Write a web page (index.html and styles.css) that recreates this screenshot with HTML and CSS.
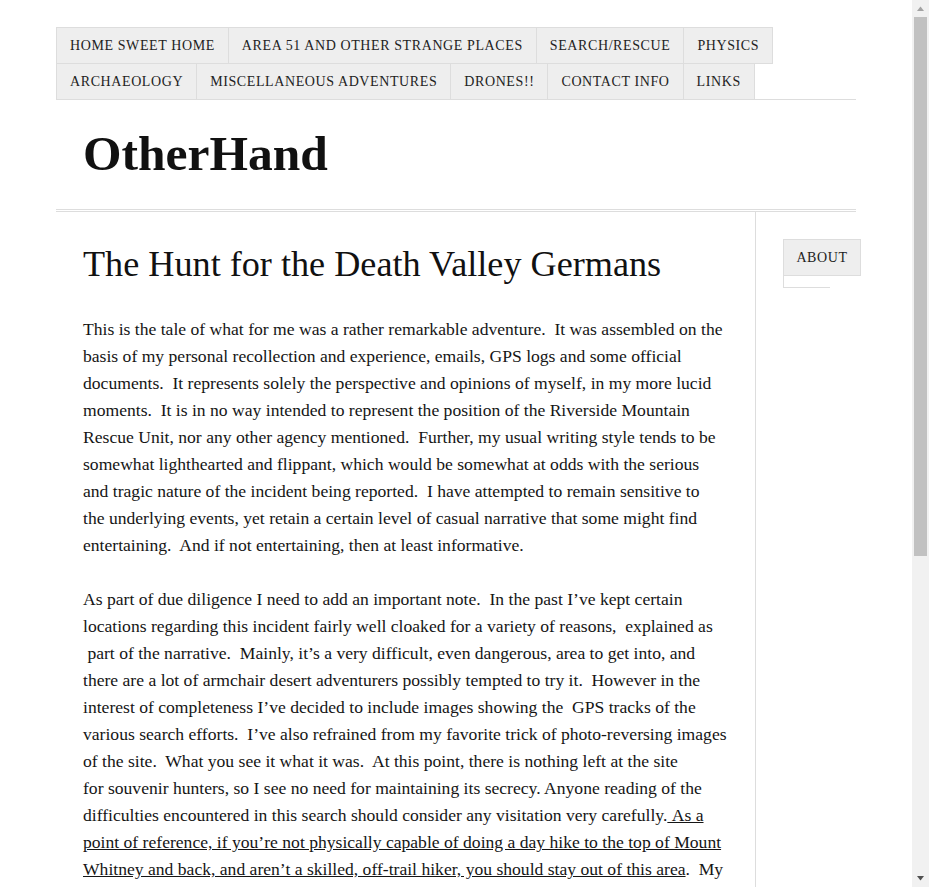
FILE: index.html
```html
<!DOCTYPE html>
<html lang="en">
<head>
<meta charset="utf-8">
<title>The Hunt for the Death Valley Germans | OtherHand</title>
<link rel="stylesheet" href="styles.css">
</head>
<body>
<div class="site">
  <nav class="menu">
    <ul class="menu-list">
      <li class="menu-item">Home Sweet Home</li>
      <li class="menu-item">Area 51 and Other Strange Places</li>
      <li class="menu-item">Search/Rescue</li>
      <li class="menu-item">Physics</li>
      <li class="menu-item">Archaeology</li>
      <li class="menu-item">Miscellaneous Adventures</li>
      <li class="menu-item">Drones!!</li>
      <li class="menu-item">Contact Info</li>
      <li class="menu-item">Links</li>
    </ul>
  </nav>
  <header class="masthead">
    <h1 class="site-title">OtherHand</h1>
  </header>
  <div class="main">
    <article class="content">
      <h2 class="entry-title">The Hunt for the Death Valley Germans</h2>
      <p class="entry-p">This is the tale of what for me was a rather remarkable adventure.&nbsp; It was assembled on the<br>basis of my personal recollection and experience, emails, GPS logs and some official<br>documents.&nbsp; It represents solely the perspective and opinions of myself, in my more lucid<br>moments.&nbsp; It is in no way intended to represent the position of the Riverside Mountain<br>Rescue Unit, nor any other agency mentioned.&nbsp; Further, my usual writing style tends to be<br>somewhat lighthearted and flippant, which would be somewhat at odds with the serious<br>and tragic nature of the incident being reported.&nbsp; I have attempted to remain sensitive to<br>the underlying events, yet retain a certain level of casual narrative that some might find<br>entertaining.&nbsp; And if not entertaining, then at least informative.</p>
      <p class="entry-p">As part of due diligence I need to add an important note.&nbsp; In the past I’ve kept certain<br>locations regarding this incident fairly well cloaked for a variety of reasons,&nbsp; explained as<br>&nbsp;part of the narrative.&nbsp; Mainly, it’s a very difficult, even dangerous, area to get into, and<br>there are a lot of armchair desert adventurers possibly tempted to try it.&nbsp; However in the<br>interest of completeness I’ve decided to include images showing the&nbsp; GPS tracks of the<br>various search efforts.&nbsp; I’ve also refrained from my favorite trick of photo-reversing images<br>of the site.&nbsp; What you see it what it was.&nbsp; At this point, there is nothing left at the site<br>for souvenir hunters, so I see no need for maintaining its secrecy. Anyone reading of the<br>difficulties encountered in this search should consider any visitation very carefully.<span class="u">&nbsp;As a<br>point of reference, if you’re not physically capable of doing a day hike to the top of Mount<br>Whitney and back, and aren’t a skilled, off-trail hiker, you should stay out of this area</span>.&nbsp; My</p>
    </article>
    <aside class="sidebar">
      <div class="side-button">About</div>
      <div class="side-list"></div>
    </aside>
  </div>
</div>
<div class="scrollbar" aria-hidden="true">
  <svg class="sb-arrow" width="17" height="17" viewBox="0 0 17 17"><path d="M5 11 L12 11 L8.5 6.5 Z" fill="#a3a3a3"/></svg>
  <div class="sb-track"><div class="sb-thumb"></div></div>
  <svg class="sb-arrow" width="17" height="17" viewBox="0 0 17 17"><path d="M5 6 L12 6 L8.5 10.5 Z" fill="#505050"/></svg>
</div>
</body>
</html>
```
FILE: styles.css
```css
html, body {
  margin: 0;
  padding: 0;
  background: #fff;
}
body {
  color: #151515;
  font-family: "Liberation Serif", "Times New Roman", serif;
  height: 887px;
  overflow: hidden;
  margin-right: 17px;
}
.site {
  width: 800px;
  margin: 27px auto 0;
}
.menu-list {
  list-style: none;
  margin: 0;
  padding: 0;
  display: flex;
  flex-wrap: wrap;
  border-bottom: 1px solid #ddd;
}
.menu-item {
  box-sizing: border-box;
  height: 37px;
  line-height: 35px;
  padding: 0 13px;
  margin: 0 -1px -1px 0;
  border: 1px solid #ddd;
  background: #eee;
  text-transform: uppercase;
  font-size: 14px;
  letter-spacing: 0.6px;
  color: #222;
  white-space: nowrap;
}
.masthead {
  padding: 0 27px;
  height: 109px;
  border-bottom: 3px double #ddd;
}
.site-title {
  margin: 0;
  padding-top: 26px;
  font-size: 49.5px;
  line-height: 56px;
  font-weight: bold;
  color: #111;
}
.main {
  display: flex;
}
.content {
  flex: 0 0 640px;
  min-width: 0;
  padding: 27px 32px 40px 27px;
  border-right: 1px solid #ddd;
}
.entry-title {
  margin: 0 0 27px;
  font-size: 36.2px;
  font-weight: normal;
  line-height: 50px;
  color: #111;
}
.entry-p {
  margin: 0 0 27px;
  font-size: 17.6px;
  line-height: 27px;
  white-space: nowrap;
}
.u {
  text-decoration: underline;
}
.sidebar {
  flex: 0 0 73px;
  min-width: 0;
  padding: 27px 0 0 27px;
}
.side-button {
  box-sizing: border-box;
  width: 78px;
  height: 37px;
  line-height: 35px;
  text-align: center;
  border: 1px solid #ddd;
  background: #eee;
  text-transform: uppercase;
  font-size: 14px;
  letter-spacing: 0.6px;
  color: #222;
}
.side-list {
  width: 46px;
  height: 11px;
  border-left: 1px solid #ddd;
  border-bottom: 1px solid #ddd;
}
.scrollbar {
  position: fixed;
  top: 0;
  right: 0;
  width: 17px;
  height: 887px;
  background: #f1f1f1;
  display: flex;
  flex-direction: column;
}
.sb-arrow {
  display: block;
  flex: 0 0 17px;
}
.sb-track {
  flex: 1;
  padding: 0 2px;
}
.sb-thumb {
  height: 539px;
  background: #c1c1c1;
}
```
